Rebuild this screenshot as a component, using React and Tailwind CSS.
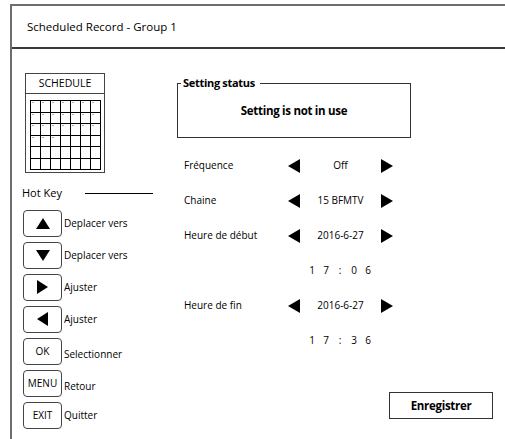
import React from 'react';

const font = { fontFamily: '"Open Sans", "Liberation Sans", sans-serif' };

const hotKeys = [
  { key: 'up', label: 'Deplacer vers' },
  { key: 'down', label: 'Deplacer vers' },
  { key: 'right', label: 'Ajuster' },
  { key: 'left', label: 'Ajuster' },
  { key: 'OK', label: 'Selectionner', low: true },
  { key: 'MENU', label: 'Retour', low: true },
  { key: 'EXIT', label: 'Quitter' },
];

function Tri({ dir, w = 12, h = 14 }) {
  const pts = {
    left: `${w},0 ${w},${h} 0,${h / 2}`,
    right: `0,0 0,${h} ${w},${h / 2}`,
    up: `0,${h} ${w},${h} ${w / 2},0`,
    down: `0,0 ${w},0 ${w / 2},${h}`,
  }[dir];
  return (
    <svg width={w} height={h} viewBox={`0 0 ${w} ${h}`} className="block">
      <polygon points={pts} fill="#000" />
    </svg>
  );
}

function KeyBox({ k }) {
  if (['up', 'down', 'right', 'left'].includes(k)) {
    const size = k === 'up' || k === 'down' ? { w: 14, h: 11 } : { w: 11, h: 14 };
    return (
      <div className="flex h-[27px] w-[39px] items-center justify-center rounded-[4px] border border-[#444]">
        <Tri dir={k} {...size} />
      </div>
    );
  }
  return (
    <div className="flex h-[27px] w-[39px] items-center justify-center rounded-[4px] border border-[#444] text-[10px]">
      {k}
    </div>
  );
}

function Calendar() {
  const marked = 24;
  return (
    <div className="ml-[13px] h-[100px] w-[80px] border border-[#444]">
      <div className="flex h-[20px] items-center justify-center border-b border-[#444] text-[10.5px]">SCHEDULE</div>
      <div className="ml-[4px] mt-[6px] grid w-[71px] grid-cols-7 border-l border-t border-black">
        {Array.from({ length: 42 }).map((_, i) => (
          <div key={i} className="relative h-[11.5px] border-b border-r border-black">
            {i < marked && <span className="absolute left-[1px] top-[1px] h-[1px] w-[2px] bg-[#aaa]" />}
          </div>
        ))}
      </div>
    </div>
  );
}

function ValueRow({ label, value }) {
  return (
    <div className="flex h-[35px] items-center">
      <div className="w-[111px] pl-[7px]">{label}</div>
      <Tri dir="left" />
      <div className="w-[81px] text-center">{value}</div>
      <Tri dir="right" />
    </div>
  );
}

function TimeRow({ digits }) {
  return (
    <div className="flex h-[35px] items-center">
      <div className="ml-[128px] flex">
        {digits.map((d, i) => (
          <span key={i} className="w-[14px] text-center">{d}</span>
        ))}
      </div>
    </div>
  );
}

export default function App() {
  return (
    <div className="h-[439px] w-[505px] overflow-hidden bg-white pl-[10px] pt-[4px] text-black" style={font}>
      <div className="h-[460px] w-[520px] border-l-2 border-t-2 border-[#6e6e6e]">
        <div className="flex h-[43px] items-center border-b-2 border-[#3a3a3a] pl-[15px] text-[11.5px]">
          Scheduled Record - Group 1
        </div>

        <div className="flex text-[10px]">
          <div className="w-[165px] pt-[24px]">
            <Calendar />
            <div className="mt-[12px] flex items-center">
              <span className="ml-[10px] text-[11px]">Hot Key</span>
              <span className="ml-[23px] h-px w-[68px] bg-black" />
            </div>
            <div className="mt-[8px] ml-[11px] flex flex-col gap-[5px]">
              {hotKeys.map((h, i) => (
                <div key={i} className="flex items-center">
                  <KeyBox k={h.key} />
                  <span className={h.low ? 'ml-[2px] mt-[7px]' : 'ml-[2px]'}>{h.label}</span>
                </div>
              ))}
            </div>
          </div>

          <div className="pt-[26px]">
            <fieldset className="h-[63px] w-[234px] border border-[#333]">
              <legend className="ml-[3px] px-[2px] pr-[5px] text-[11px] font-bold tracking-[-0.3px]">Setting status</legend>
              <div className="mt-[10px] text-center text-[11.5px] font-bold tracking-[-0.3px]">Setting is not in use</div>
            </fieldset>
            <div className="mt-[10px]">
              <ValueRow label="Fréquence" value="Off" />
              <ValueRow label="Chaine" value="15 BFMTV" />
              <ValueRow label="Heure de début" value="2016-6-27" />
              <TimeRow digits={['1', '7', ':', '0', '6']} />
              <ValueRow label="Heure de fin" value="2016-6-27" />
              <TimeRow digits={['1', '7', ':', '3', '6']} />
            </div>
            <div className="ml-[212px] mt-[34px] flex h-[27px] w-[104px] items-center justify-center border border-[#333] text-[11.5px] font-bold tracking-[-0.3px]">
              Enregistrer
            </div>
          </div>
        </div>
      </div>
    </div>
  );
}
